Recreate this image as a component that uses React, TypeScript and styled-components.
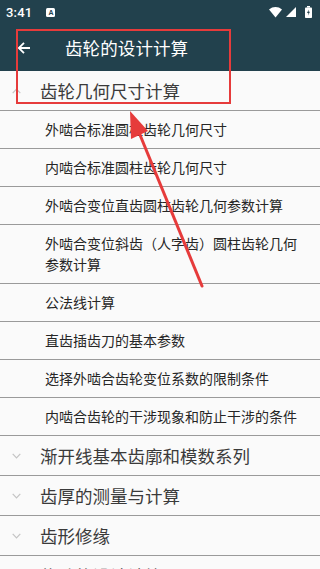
import React from "react";
import styled, { createGlobalStyle } from "styled-components";

const GlobalStyle = createGlobalStyle`
    html, body {
        margin: 0;
        padding: 0;
        background: #fafafa;
    }
`;

const cjk = `"Noto Sans CJK SC", "Noto Sans", sans-serif`;
const barColor = "#22414d";

type Group = {
    title: string,
    open?: boolean,
    items?: string[],
}

const groups: Group[] = [
    {
        title: "齿轮几何尺寸计算",
        open: true,
        items: [
            "外啮合标准圆柱齿轮几何尺寸",
            "内啮合标准圆柱齿轮几何尺寸",
            "外啮合变位直齿圆柱齿轮几何参数计算",
            "外啮合变位斜齿（人字齿）圆柱齿轮几何参数计算",
            "公法线计算",
            "直齿插齿刀的基本参数",
            "选择外啮合齿轮变位系数的限制条件",
            "内啮合齿轮的干涉现象和防止干涉的条件",
        ],
    },
    { title: "渐开线基本齿廓和模数系列" },
    { title: "齿厚的测量与计算" },
    { title: "齿形修缘" },
    { title: "传动的设计计算" },
];

const App: React.FC = () => {
    return (
        <Screen>
            <GlobalStyle />
            <StatusBar>
                <Time>3:41</Time>
                <NotifIcon>A</NotifIcon>
                <StatusIcons>
                    <svg width="13" height="11" viewBox="0 0 13 11">
                        <path d="M0 2.5 C3.8 -0.8 9.2 -0.8 13 2.5 L6.5 10.5 Z" fill="#fff" />
                    </svg>
                    <svg width="10" height="10" viewBox="0 0 10 10">
                        <path d="M10 0 L10 10 L0 10 Z" fill="#fff" />
                    </svg>
                    <svg width="7" height="12" viewBox="0 0 7 12">
                        <rect x="2" y="0" width="3" height="1.5" fill="#fff" />
                        <rect x="0" y="1.5" width="7" height="10.5" rx="0.8" fill="#fff" />
                        <path d="M3.8 3.5 L2 7 L3.4 7 L3 9.5 L5 5.8 L3.6 5.8 Z" fill={barColor} />
                    </svg>
                </StatusIcons>
            </StatusBar>
            <Toolbar>
                <BackButton>
                    <svg width="14" height="14" viewBox="0 0 14 14">
                        <path d="M13 7 H2 M7 1.8 L1.8 7 L7 12.2" stroke="#fff" strokeWidth="1.8" fill="none" />
                    </svg>
                </BackButton>
                <Title>齿轮的设计计算</Title>
            </Toolbar>
            <List>
                {groups.map(g => (
                    <React.Fragment key={g.title}>
                        <GroupRow>
                            <Chevron open={!!g.open}>
                                <svg width="9" height="6" viewBox="0 0 9 6">
                                    <path d="M0.7 5.2 L4.5 1.2 L8.3 5.2" stroke="#c4c4c4" strokeWidth="1.2" fill="none" />
                                </svg>
                            </Chevron>
                            <GroupTitle>{g.title}</GroupTitle>
                        </GroupRow>
                        {g.open && g.items!.map(item => (
                            <ChildRow key={item}>{item}</ChildRow>
                        ))}
                    </React.Fragment>
                ))}
            </List>
            <MarkBox />
            <ArrowLayer width="320" height="569" viewBox="0 0 320 569">
                <line x1="202" y1="286" x2="138" y2="130" stroke="#e63b3b" strokeWidth="3" strokeLinecap="round" />
                <path d="M130 111 L148 131 L131 139 Z" fill="#e63b3b" />
            </ArrowLayer>
        </Screen>
    );
};

export default App;


const Screen = styled.div`
    position: relative;
    width: 320px;
    height: 569px;
    overflow: hidden;
    background: #fafafa;
`;

const StatusBar = styled.div`
    display: flex;
    height: 24px;
    padding: 0 8px 0 6px;
    align-items: center;
    background: ${ barColor };
    color: #fff;
`;

const Time = styled.span`
    font-family: Roboto, "Liberation Sans", sans-serif;
    font-size: 13px;
    font-weight: 500;
    letter-spacing: 0.2px;
`;

const NotifIcon = styled.span`
    display: flex;
    width: 9px;
    height: 9px;
    margin-left: 14px;
    border-radius: 1.5px;
    background: #fff;
    color: ${ barColor };
    font-family: "Liberation Sans", sans-serif;
    font-size: 7px;
    font-weight: 700;
    align-items: center;
    justify-content: center;
`;

const StatusIcons = styled.div`
    display: flex;
    margin-left: auto;
    gap: 4px;
    align-items: center;

    & svg:last-child {
        margin-left: 5px;
    }
`;

const Toolbar = styled.div`
    display: flex;
    height: 47px;
    align-items: center;
    background: ${ barColor };
`;

const BackButton = styled.div`
    display: flex;
    width: 18px;
    margin-left: 17px;
    align-items: center;
`;

const Title = styled.div`
    margin-left: 30px;
    color: #fff;
    font-family: ${ cjk };
    font-size: 17.5px;
    letter-spacing: 0.1px;
`;

const List = styled.div`
    display: flex;
    flex-direction: column;
`;

const GroupRow = styled.div`
    display: flex;
    height: 39px;
    border-bottom: 1px solid #9a9a9a;
    align-items: center;
`;

const Chevron = styled.div<{ open: boolean }>`
    display: flex;
    width: 40px;
    padding-left: 12px;
    box-sizing: border-box;

    & svg {
        transform: ${ props => props.open ? "none" : "rotate(180deg)" };
    }
`;

const GroupTitle = styled.div`
    color: #3a3a3a;
    font-family: ${ cjk };
    font-size: 17.5px;
    line-height: 23px;
`;

const ChildRow = styled.div`
    padding: 8px 16px 8px 45px;
    border-bottom: 1px solid #9a9a9a;
    color: #262626;
    font-family: ${ cjk };
    font-size: 14px;
    line-height: 21px;
`;

const MarkBox = styled.div`
    position: absolute;
    top: 29px;
    left: 16px;
    width: 211px;
    height: 71px;
    border: 2px solid #e63b3b;
`;

const ArrowLayer = styled.svg`
    position: absolute;
    top: 0;
    left: 0;
    pointer-events: none;
`;
